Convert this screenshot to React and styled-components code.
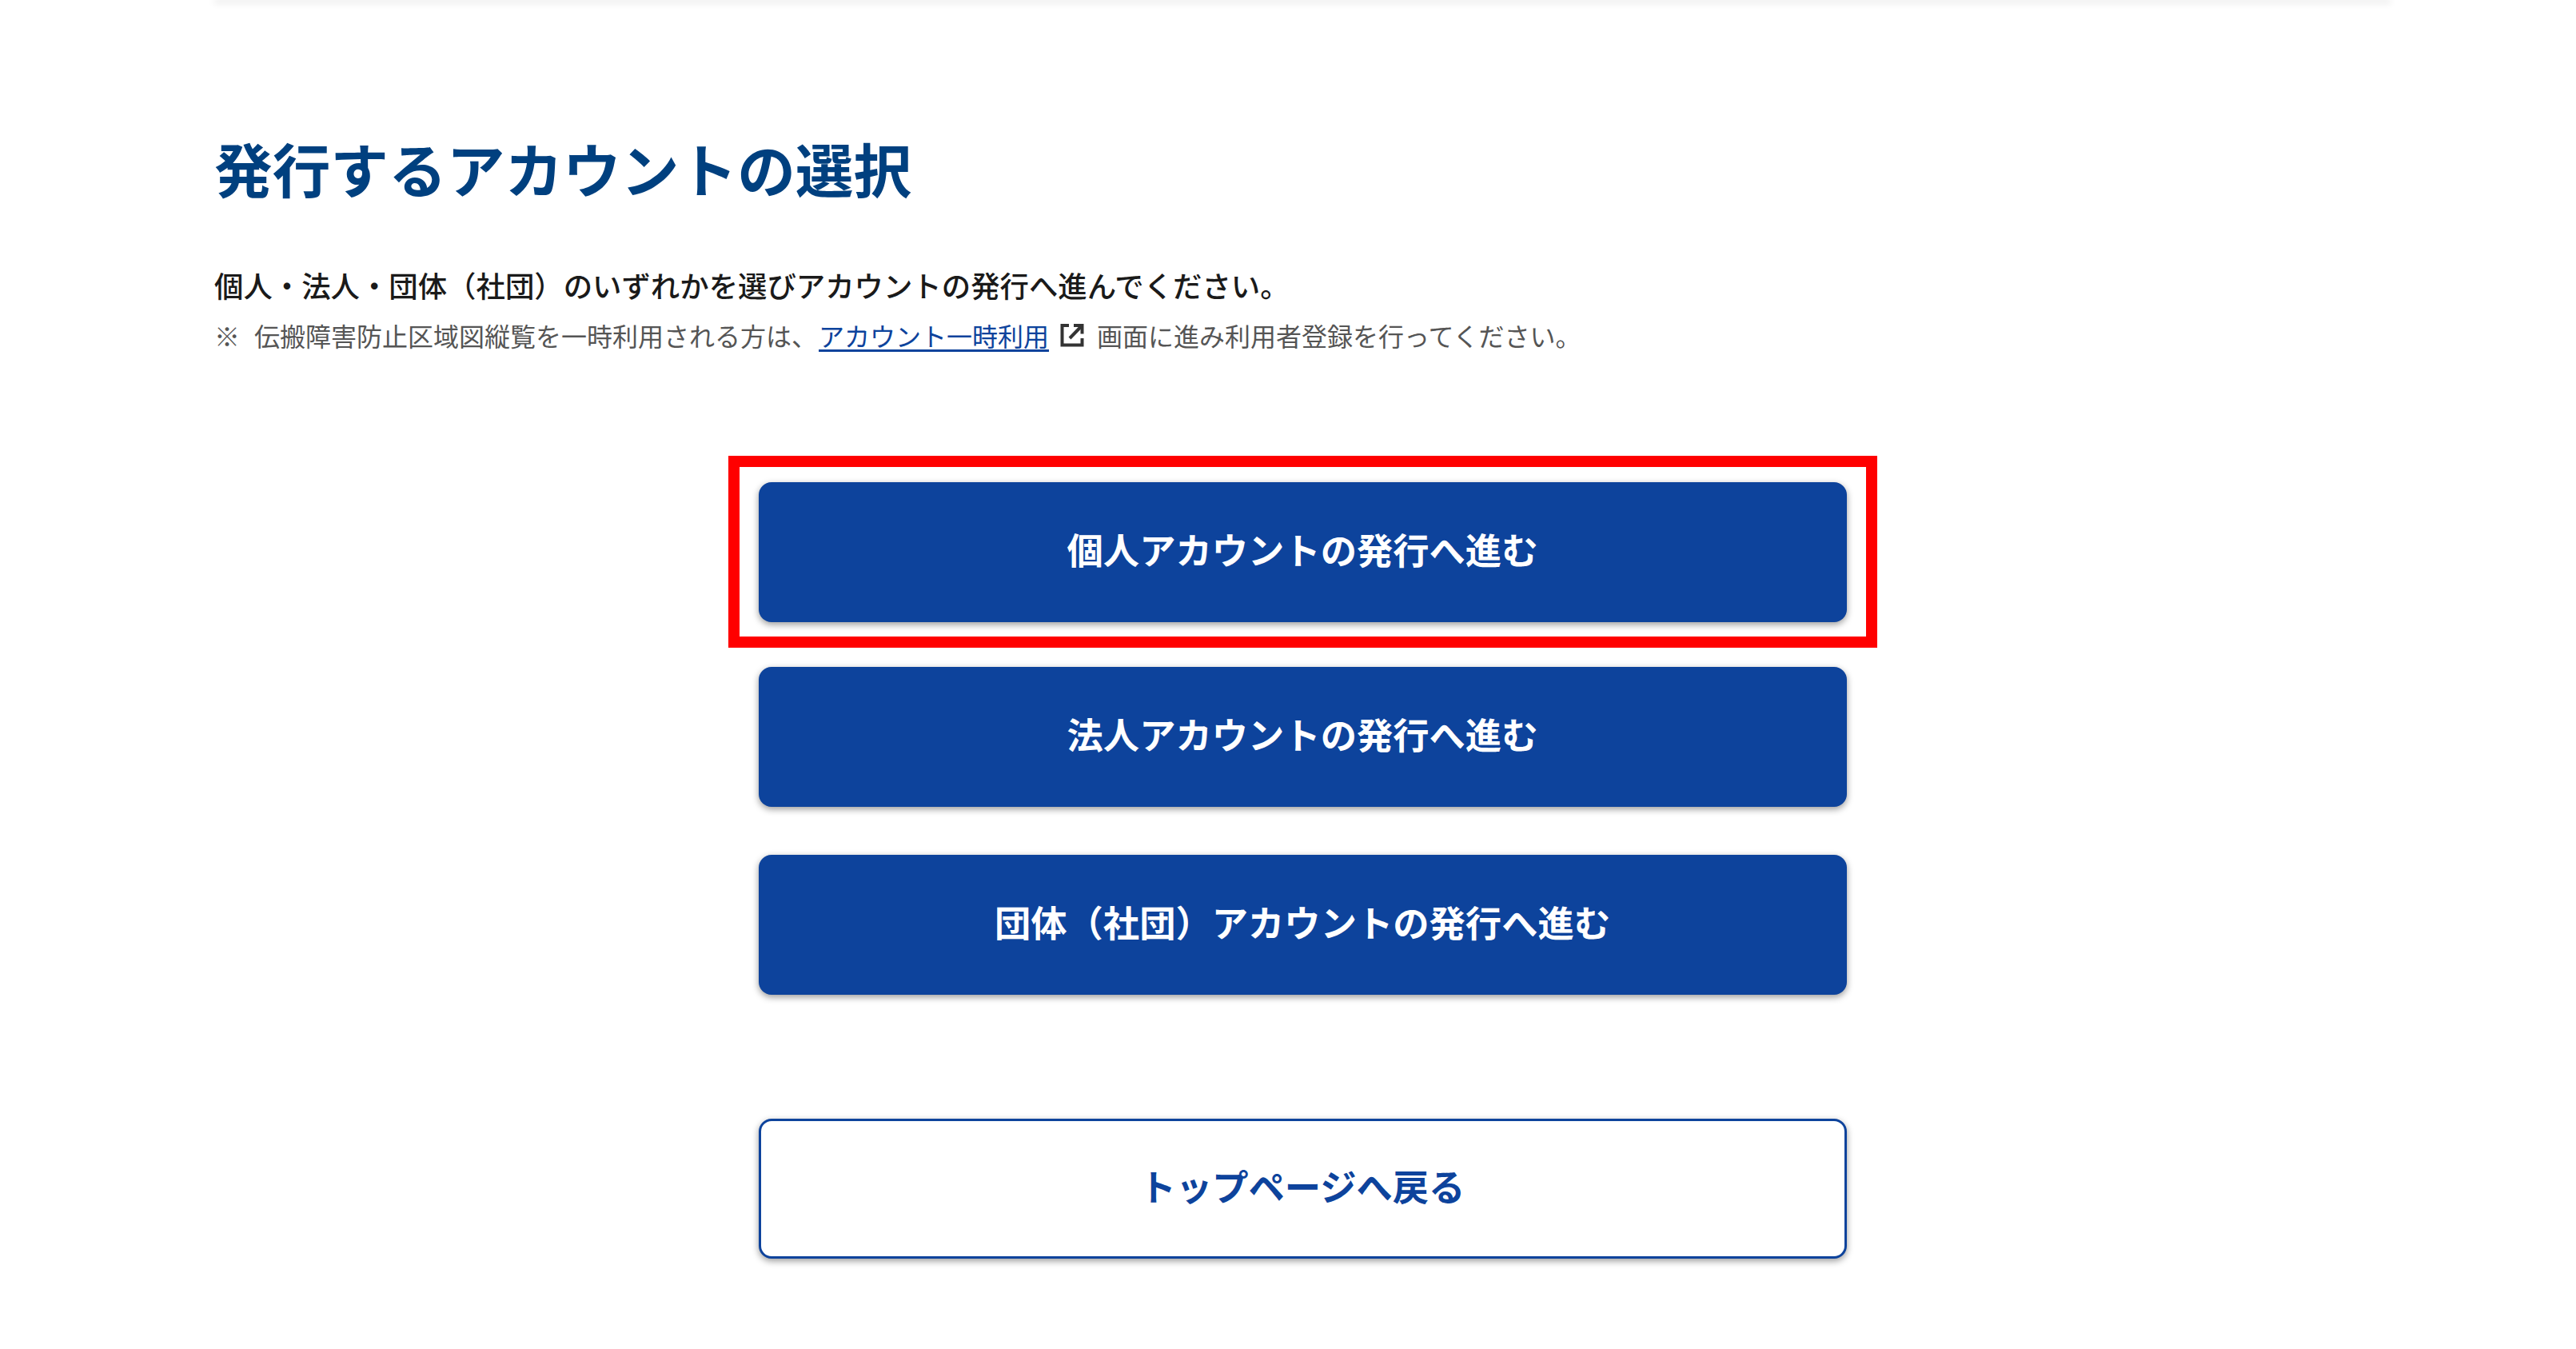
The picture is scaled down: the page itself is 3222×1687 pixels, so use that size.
import React from 'react'
import { createGlobalStyle, styled } from 'styled-components'

const buttons = [
    '個人アカウントの発行へ進む',
    '法人アカウントの発行へ進む',
    '団体（社団）アカウントの発行へ進む',
]

const ExternalIcon = () => (
    <IconSvg viewBox="0 0 30 30" fill="none" stroke="#333" strokeWidth="4">
        <path d="M11 3H2.5v24.5H27.5V19" />
        <path d="M17 3h10.5v10.5" />
        <path d="M27 3.5L12 19" />
    </IconSvg>
)

const App = () => {
    return (
        <Page>
            <GlobalStyle />
            <TopBar />
            <Content>
                <Heading>発行するアカウントの選択</Heading>
                <Lead>個人・法人・団体（社団）のいずれかを選びアカウントの発行へ進んでください。</Lead>
                <Note>
                    <NoteMark>※</NoteMark>
                    伝搬障害防止区域図縦覧を一時利用される方は、
                    <NoteLink href="#">アカウント一時利用</NoteLink>
                    <ExternalIcon />
                    画面に進み利用者登録を行ってください。
                </Note>
                <Actions>
                    <Highlight>
                        <ActionButton>{buttons[0]}</ActionButton>
                    </Highlight>
                    <ActionButton>{buttons[1]}</ActionButton>
                    <ActionButton>{buttons[2]}</ActionButton>
                    <BackButton>トップページへ戻る</BackButton>
                </Actions>
            </Content>
        </Page>
    )
}

const GlobalStyle = createGlobalStyle`
    html, body {
        margin: 0;
        padding: 0;
        background: #fff;
    }
    body {
        font-family: "Noto Sans CJK JP", "Noto Sans", sans-serif;
    }
`

const Page = styled.div`
    width: 3222px;
    height: 1687px;
    overflow: hidden;
`

const TopBar = styled.div`
    width: 2722px;
    height: 1px;
    margin: -1px 0 0 268px;
    background: #ccc;
    box-shadow: 0 2px 8px rgba(0, 0, 0, 0.45);
`

const Content = styled.main`
    display: flex;
    flex-direction: column;
    padding: 0 232px 0 268px;
`

const Heading = styled.h1`
    margin: 160px 0 0;
    font-size: 72.7px;
    line-height: 100px;
    font-weight: 700;
    color: #00407f;
`

const Lead = styled.p`
    margin: 69px 0 0;
    font-size: 36.4px;
    line-height: 54px;
    font-weight: 500;
    color: #1a1a1a;
`

const Note = styled.p`
    display: flex;
    align-items: center;
    margin: 12px 0 0;
    font-size: 32px;
    line-height: 48px;
    color: #555;
`

const NoteMark = styled.span`
    width: 50px;
`

const NoteLink = styled.a`
    margin-left: 2px;
    padding-right: 4px;
    color: #0d439c;
    text-decoration: underline;
    text-underline-offset: 4px;
`

const IconSvg = styled.svg`
    width: 30px;
    height: 30px;
    margin: 0 16px 0 10px;
`

const Actions = styled.div`
    display: flex;
    flex-direction: column;
    align-items: center;
    width: 100%;
    margin-top: 127px;
`

const Highlight = styled.div`
    padding: 19px 24px 18px;
    border: 14px solid #ff0000;
    margin-bottom: 24px;
`

const ActionButton = styled.button`
    display: block;
    width: 1361px;
    height: 175px;
    margin-bottom: 60px;
    padding: 0 0 9px;
    border: 0;
    border-radius: 16px;
    background: #0d439c;
    box-shadow: 0 3px 9px rgba(0, 0, 0, 0.4);
    font-family: inherit;
    font-size: 45.3px;
    font-weight: 700;
    color: #fff;

    ${Highlight} > & {
        margin-bottom: 0;
    }
`

const BackButton = styled(ActionButton)`
    margin-top: 95px;
    border: 3px solid #0d439c;
    background: #fff;
    color: #0d439c;
`

export default App
